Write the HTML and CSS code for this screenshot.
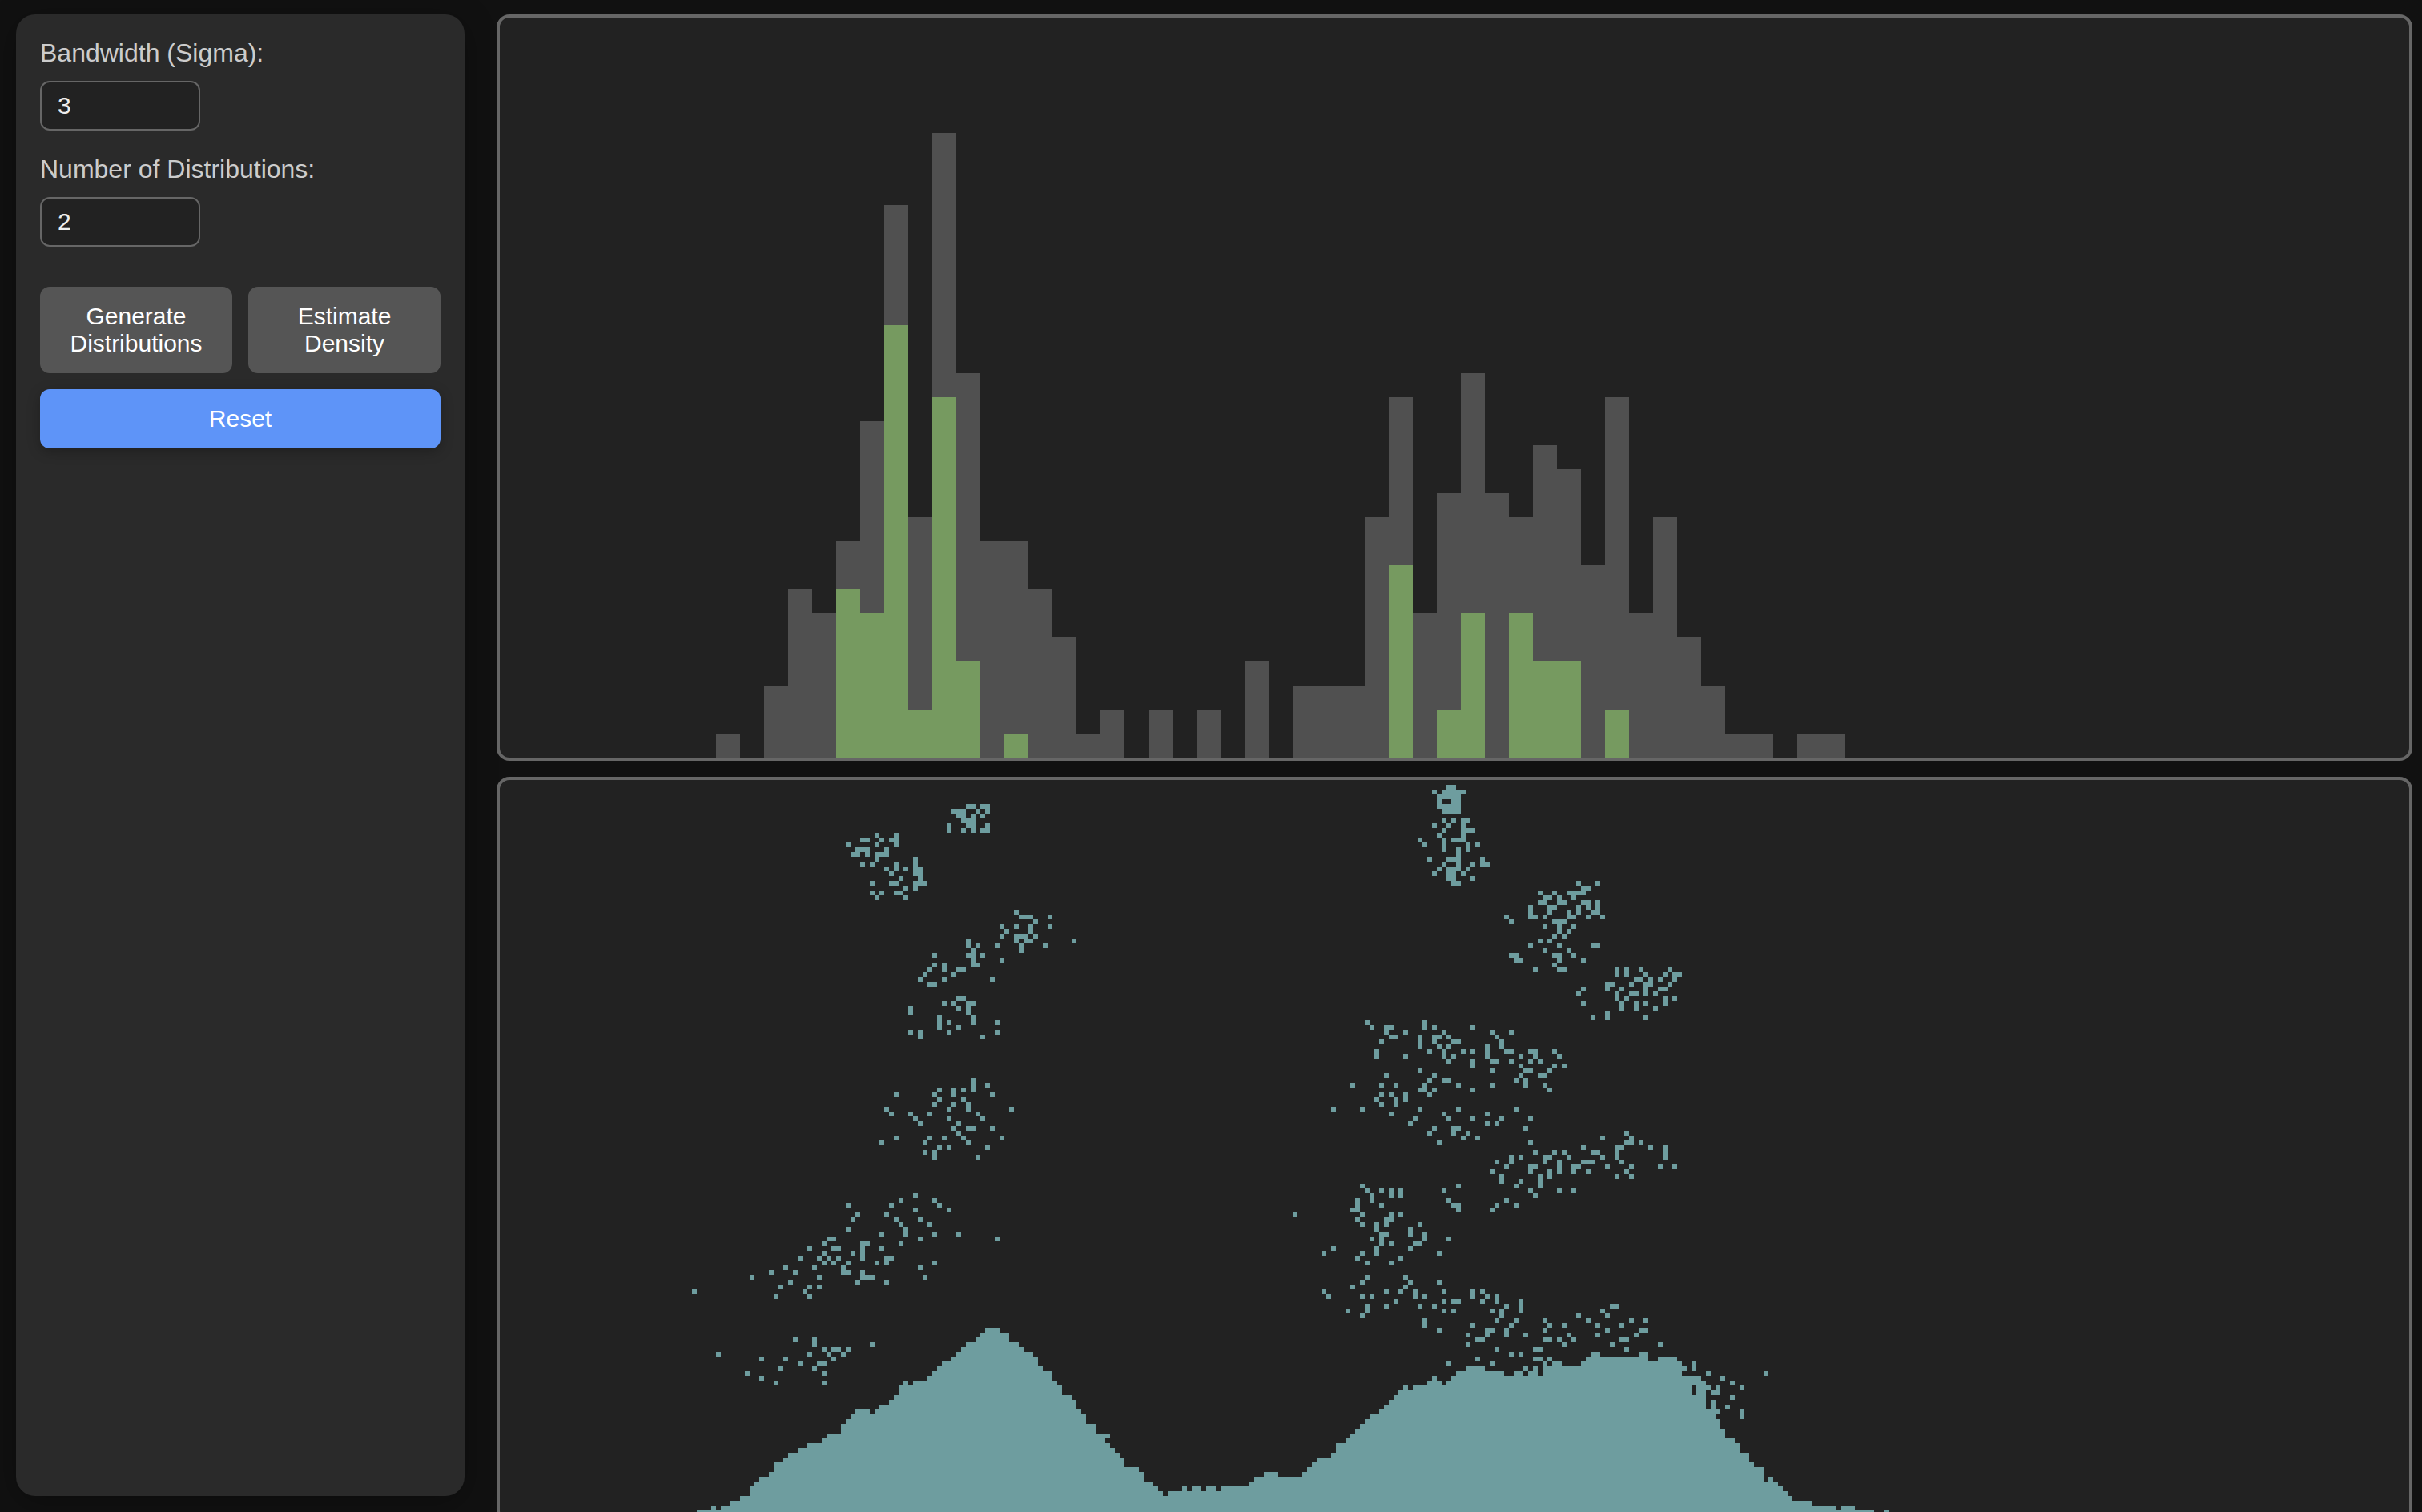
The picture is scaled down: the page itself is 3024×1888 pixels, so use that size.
FILE: index.html
```html
<!DOCTYPE html>
<html lang="en">
<head>
<meta charset="utf-8">
<meta name="viewport" content="width=device-width, initial-scale=1">
<title>Density Estimation</title>
<link rel="stylesheet" href="styles.css">
</head>
<body>
<div class="app">
  <form class="sidebar" onsubmit="return false">
    <div class="field">
      <label for="bandwidth">Bandwidth (Sigma):</label>
      <input id="bandwidth" type="number" min="1" value="3">
    </div>
    <div class="field">
      <label for="count">Number of Distributions:</label>
      <input id="count" type="number" min="1" value="2">
    </div>
    <div class="actions">
      <button type="button" class="button">Generate Distributions</button>
      <button type="button" class="button">Estimate Density</button>
      <button type="button" class="button button-primary">Reset</button>
    </div>
  </form>
  <main class="plots">
    <canvas id="histogram" class="plot" role="img" aria-label="Sample histogram"></canvas>
    <canvas id="density" class="plot" role="img" aria-label="Density built from falling particles"></canvas>
  </main>
</div>
<script src="script.js"></script>
</body>
</html>
```
FILE: styles.css
```css
* {
  box-sizing: border-box;
}

body {
  margin: 0;
  height: 100vh;
  overflow: hidden;
  background: #111;
  font-family: Arial, "Liberation Sans", sans-serif;
}

.app {
  display: grid;
  grid-template-columns: 560px minmax(0, 1fr);
  align-items: start;
  gap: 40px;
  padding: 18px 12px 0 20px;
}

.sidebar {
  height: calc(100vh - 38px);
  padding: 30px;
  border-radius: 24px;
  background: #2a2a2a;
  box-shadow: 0 8px 40px rgba(0, 0, 0, 0.3);
}

.field {
  display: flex;
  flex-direction: column;
  align-items: flex-start;
  gap: 16px;
  margin-bottom: 30px;
}

.field label {
  color: #ccc;
  font-size: 32px;
  line-height: 37px;
}

.field input {
  width: 200px;
  height: 62px;
  padding: 0 20px;
  border: 2px solid #666;
  border-radius: 12px;
  background: #222;
  color: #eee;
  font-family: inherit;
  font-size: 30px;
  appearance: textfield;
}

.field input::-webkit-inner-spin-button {
  display: none;
}

.actions {
  display: grid;
  grid-template-columns: 1fr 1fr;
  gap: 20px;
  margin-top: 50px;
}

.button {
  padding: 20px;
  border: 0;
  border-radius: 12px;
  background: #555;
  color: #fff;
  font-family: inherit;
  font-size: 30px;
  line-height: 34px;
  cursor: pointer;
}

.button-primary {
  grid-column: 1 / -1;
  background: #5e94f8;
  box-shadow: 0 4px 16px rgba(0, 0, 0, 0.25);
}

.plots {
  display: flex;
  flex-direction: column;
  gap: 20px;
}

.plot {
  display: block;
  width: 100%;
  height: 932px;
  border: 4px solid #666;
  border-radius: 16px;
  background: #222;
}
```
FILE: script.js
```js
const BIN = 30;
const CELL = 6;
const FLOOR_ROW = 154;

// Bin heights, starting at bin 9.
const samples = [
  1, 0, 3, 7, 6, 9, 14, 23, 10, 26, 16, 9, 9, 7, 5, 1, 2, 0, 2, 0, 2, 0, 4, 0,
  3, 3, 3, 10, 15, 6, 11, 16, 11, 10, 13, 12, 8, 15, 6, 10, 5, 3, 1, 1, 0, 1, 1
];
const remaining = {
  14: 7, 15: 6, 16: 18, 17: 2, 18: 15, 19: 4, 21: 1,
  37: 8, 39: 2, 40: 6, 42: 6, 43: 4, 44: 4, 46: 2
};

// Surface of the settled pile from column 41: "top row" or "top row x columns".
const surface = `152x3 151 152 151x2 150x2 149x2 147 146 145x2 144 142x2 141 140x2 139x2
138x3 137 136x3 134 133 132 131x3 132 131 130x2 129 128 126 125 126 125x3 124 123 122
121x2 120 119 118 117x2 116 115 114x3 115x2 117x2 118 119x2 120 122 123x2 125 126
128x2 129 131 132 134x2 136x2 138 139 140 141 143x3 144 146x2 147 148 149 148x3 147
148 147x2 148 147x2 148 147x6 146 145x2 144x3 145x5 144 143 142 141x3 140 138x2 137
136 135 134 133 132x2 131 130 129 128 127 126 127 126x3 125 124 125 126 125 124
123x2 122x4 123x4 124x2 123x2 124 123 122 124 121 122 121x2 122x4 121 120 119x2
120x8 119x2 121x2 120x4 121 124x4 125 131 129 133 135 137x2 138 140x2 142 143x2 146
145 146 147 148 149 150x4 151x5 152 151x3 152x4 153x2 152 153x3`;

// Loose particles: row, then its columns or column runs.
const particles = `
1 197-198
2 194 196-200
3 195-199
4 195 198-199
5 97-98 100-101 195-199
6 94-96 99 101 196-199
7 95-96 98 100
8 96-98 196 198 200-201
9 93 97-98 101 194 197 200
10 93 96 98 100-101 196 200-202
11 78 82 195 200
12 75-76 79 81-82 191 196 198-200
13 72 78 82 192 196 201 203
14 74-76 80 196 199 201
15 73-74 76 78-80 199
16 78 86 193 197-199 204
17 75 77 82 86 196 199 202 204-205
18 80 82 84 86-87 195 197-199 201
19 81 86-87 194 197-198 200
20 83 87 197-198 202
21 77 81-82 86-88 198-199 224 228
22 84 86 225-226
23 77 79 82-83 216 219 222-225
24 78 84 217-218 220 223
25 216-217 220-221 225-226 228
26 214 218-219 224 226 228
27 107 214 218 222 224 227-228
28 108-110 114 209 214-215 217 222-223 226 229
29 111 210 219-221
30 104 107 110 114 217 220 223
31 105 110 220 222
32 104 107-109 111 219 221
33 97 107 109-110 119 216 218
34 97 99 103 108 113 214 220 227-228
35 98 108 217 222
36 90 97-98 100 210-211 219-220 223
37 98 104 211-212 220 225
38 90 92 98-99 219
39 89 92 95-96 215 220-221 232 234 237 243
40 88 94 232 234 238 242 244-245
41 87 92 102 236-237 239 241 244
42 89-90 230-231 235 238-239 243
43 225 230 233 238 241-242
44 224 232 235-236 238 240
45 95-96 232 234 242 244
46 92 94 97-98 225 233 236 238 242
47 85 95 97 233 236 240
48 85 97 230
49 91 98 227 230 238
50 91 93 98 103 180 192
51 91 95 181 184-185 192 194 202
52 85 87 93 103 184 188 196 206 210
53 87 100 185-186 191 194-195 197 207
54 183 191 194 198-199 208
55 191 195 197 205 208
56 182 193 196 200 202 205 209-210 214-215 219
57 182 188 196 198 205 212 215 220
58 197 202 206-207 210 214 216
59 202 212 219 221
60 191 206 213-214 218
61 184 194 212 216-217
62 98 193 196-197 211 213
63 98 101 177 183 186 192 199 206 213 217
64 91 94 96 98 191-192 194 202 218
65 82 90 94 102 183 185 188 193
66 91 96 182 186 188
67 90 94 97 183 186
68 80 93 97 106 173 179 191 199 211
69 81 85 89 99 185 196 205
70 86 93 100 190 197 202 208 214
71 87 95 189 205 207
72 94 97-98 102 194 198-199 213
73 95 193 198 201 234
74 82 89 92 96 104 200 203 229 235
75 79 88 97 195 214 234-235 237
76 91 93 101 225 232-233 239 242
77 88 90 215 219 221 227-228 232 242
78 90 99 210 212 217-218 222 229 232 242
79 207 210 217 220 225-227 233
80 209 214-215 220 223-224 230 235 241 244
81 206 214 218 220 223 226 234
82 208 216 218 232 235
83 208 212 216
84 179 199 211 216
85 180 183 185 187 196 214 220 223
86 86 181 185 187 215
87 83 90 178 181 197 209
88 72 81 91 178 183 198-199 207 211
89 86 93 177-178 199 206
90 74 80 165 179 185 187
91 73 82 87 178 184-185
92 83 89 179 182 184 191
93 72 84 182 189
94 79 84 90 95 183-184 189 192
95 68-69 87 103 181 183 192 197
96 67 75-76 83 183 185 190-191
97 64 69-70 75 79 173 182 189
98 67 73 75 171 179 182 195
99 62 66 68 70 75 80-81 178 187
100 67 69 72 78 80 90 180 185
101 59 65 71 87
102 56 61 71-72 75
103 52 66 75-77 88 180 188
104 60 74 80 179 189 195
105 58 64 66 177 188
106 40 63 171 184 187 190 196 202 204
107 57 64 172 179 181 190 192 202 205 207
108 186 196 198-199 204 207 212
109 180 184 191 194 209 212 231-232
110 176 180 196 198 206 208 212 229
111 179 208 224 230
112 192 207 211 217 226 235 238
113 192 202 210 218 221 228 233
114 195 205-206 209 217 230 237-238
115 201 205 209 213 222 228 236
116 61 65 203-204 217-218 220 223 233-234
117 65 77 201 221 231 241
118 67 69-70 72 207 215-216 234
119 45 64 68 71 210 212
120 54 59 69 203 215-216 218
121 62 66-67 197 206 248
122 58 65 213 246 248
123 51 67 251 263
124 54 254
125 57 67 256
126 251 253 258
127 252-253
128 256
130 255
131 253 258
132 258
136 126`;

const holes = [[248, 126], [248, 127], [126, 137]];

function prepare(id) {
  const canvas = document.getElementById(id);
  canvas.width = canvas.clientWidth;
  canvas.height = canvas.clientHeight;
  return canvas.getContext("2d");
}

function drawHistogram() {
  const ctx = prepare("histogram");
  const bar = (bin, n) => ctx.fillRect(bin * BIN, ctx.canvas.height - n * BIN, BIN, n * BIN);
  ctx.fillStyle = "#505050";
  samples.forEach((n, i) => bar(i + 9, n));
  ctx.fillStyle = "#769a60";
  Object.entries(remaining).forEach(([bin, n]) => bar(Number(bin), n));
}

function drawDensity() {
  const ctx = prepare("density");
  const cells = (col, row, w, h) => ctx.fillRect(col * CELL, row * CELL, w * CELL, h * CELL);
  ctx.fillStyle = "#6e9d9f";
  let col = 41;
  surface.split(/\s+/).forEach((part) => {
    let [row, w = 1] = part.split("x").map(Number);
    cells(col, row, w, FLOOR_ROW - row);
    col += w;
  });
  particles.trim().split("\n").forEach((line) => {
    const [row, ...runs] = line.split(" ");
    runs.forEach((run) => {
      const [from, to = from] = run.split("-").map(Number);
      cells(from, Number(row), to - from + 1, 1);
    });
  });
  holes.forEach(([c, r]) => ctx.clearRect(c * CELL, r * CELL, CELL, CELL));
}

function draw() {
  drawHistogram();
  drawDensity();
}

window.addEventListener("resize", draw);
draw();
```
